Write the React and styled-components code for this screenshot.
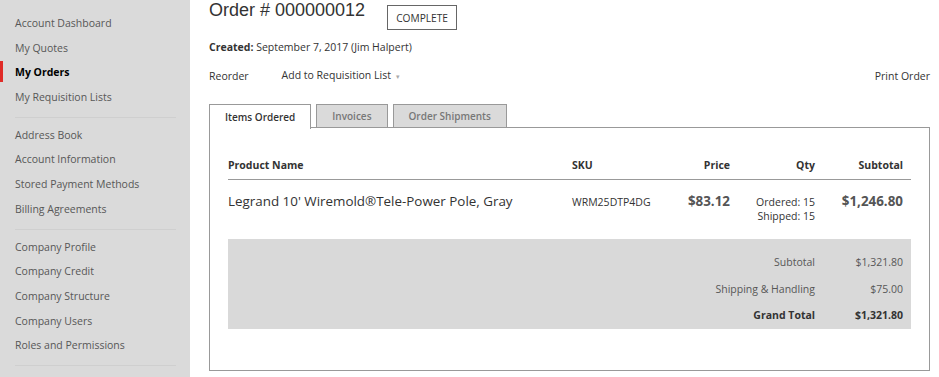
import React from 'react'
import styled, { createGlobalStyle } from 'styled-components'

const GlobalStyle = createGlobalStyle`
    html, body, #root {
        margin: 0;
        padding: 0;
        height: 100%;
    }
    body {
        font-family: "Open Sans", "Liberation Sans", Arial, sans-serif;
        color: #333;
        background: #fff;
        overflow: hidden;
    }
`;

const navGroups = [
    ['Account Dashboard', 'My Quotes', 'My Orders', 'My Requisition Lists'],
    ['Address Book', 'Account Information', 'Stored Payment Methods', 'Billing Agreements'],
    ['Company Profile', 'Company Credit', 'Company Structure', 'Company Users', 'Roles and Permissions'],
];

const totals = [
    { label: 'Subtotal', value: '$1,321.80' },
    { label: 'Shipping & Handling', value: '$75.00' },
    { label: 'Grand Total', value: '$1,321.80', strong: true },
];

const App = () => {
    return (
        <>
            <GlobalStyle />
            <Page>
                <Sidebar>
                    {navGroups.map((group, i) => (
                        <NavGroup key={i}>
                            {group.map(item => (
                                <NavItem key={item} $active={item === 'My Orders'}>{item}</NavItem>
                            ))}
                        </NavGroup>
                    ))}
                </Sidebar>
                <Main>
                    <TitleRow>
                        <Title>Order # 000000012</Title>
                        <Status>Complete</Status>
                    </TitleRow>
                    <Created><b>Created:</b> September 7, 2017 (Jim Halpert)</Created>
                    <Actions>
                        <ActionLink>Reorder</ActionLink>
                        <ActionLink $gap>Add to Requisition List <Caret>▾</Caret></ActionLink>
                        <ActionLink $right>Print Order</ActionLink>
                    </Actions>
                    <Tabs>
                        <Tab $active>Items Ordered</Tab>
                        <Tab>Invoices</Tab>
                        <Tab>Order Shipments</Tab>
                    </Tabs>
                    <Panel>
                        <HeadRow>
                            <HeadCell>Product Name</HeadCell>
                            <HeadCell>SKU</HeadCell>
                            <HeadCell $right>Price</HeadCell>
                            <HeadCell $right>Qty</HeadCell>
                            <HeadCell $right $pad>Subtotal</HeadCell>
                        </HeadRow>
                        <ItemRow>
                            <ProductName>Legrand 10' Wiremold®Tele-Power Pole, Gray</ProductName>
                            <Sku>WRM25DTP4DG</Sku>
                            <Money $right>$83.12</Money>
                            <Qty>
                                <span>Ordered: 15</span>
                                <span>Shipped: 15</span>
                            </Qty>
                            <Money $right $pad>$1,246.80</Money>
                        </ItemRow>
                        <Totals>
                            {totals.map(t => (
                                <TotalRow key={t.label} $strong={t.strong}>
                                    <span>{t.label}</span>
                                    <span>{t.value}</span>
                                </TotalRow>
                            ))}
                        </Totals>
                    </Panel>
                </Main>
            </Page>
        </>
    );
}

const Page = styled.div`
    display: flex;
    min-height: 100vh;
`;

const Sidebar = styled.aside`
    width: 190px;
    flex-shrink: 0;
    background: #dadada;
    padding-top: 11px;
    box-sizing: border-box;
`;

const NavGroup = styled.ul`
    list-style: none;
    margin: 0;
    padding: 0 0 6px;

    &::after{
        content: '';
        display: block;
        height: 1px;
        margin: 0 14px 6px 15px;
        background: #cfcfcf;
        transform: translateY(7px);
    }
`;

const NavItem = styled.li`
    position: relative;
    height: 24.7px;
    line-height: 24.7px;
    padding-left: 15px;
    font-size: 10.5px;
    color: ${p => p.$active ? '#000' : '#575757'};
    font-weight: ${p => p.$active ? 700 : 400};

    &::before{
        content: '';
        display: ${p => p.$active ? 'block' : 'none'};
        position: absolute;
        left: 0;
        top: 1px;
        width: 3px;
        height: 21px;
        background: #e02b27;
    }
`;

const Main = styled.main`
    flex: 1;
    padding: 0 9px 0 19px;
    min-width: 0;
`;

const TitleRow = styled.div`
    display: flex;
    align-items: flex-start;
`;

const Title = styled.h1`
    margin: 0;
    font-family: "Liberation Sans", Arial, sans-serif;
    font-weight: 400;
    font-size: 18px;
    line-height: 21px;
    color: #333;
`;

const Status = styled.span`
    margin: 5px 0 0 22px;
    height: 25px;
    box-sizing: border-box;
    border: 1px solid #666;
    padding: 0 8px;
    display: flex;
    align-items: center;
    font-size: 10.2px;
    text-transform: uppercase;
    color: #333;
`;

const Created = styled.p`
    margin: 9px 0 0;
    font-size: 10.5px;
    line-height: 16px;
    color: #333;

    b{
        font-weight: 700;
    }
`;

const Actions = styled.div`
    display: flex;
    align-items: center;
    margin-top: 13px;
    height: 16px;
`;

const ActionLink = styled.span`
    font-size: 10.5px;
    line-height: 16px;
    color: #333;
    margin-left: ${p => p.$gap ? '33px' : '0'};
    ${p => p.$right && 'margin-left: auto;'}
`;

const Caret = styled.span`
    color: #aaa;
    font-size: 7px;
    margin-left: 2px;
`;

const Tabs = styled.div`
    display: flex;
    gap: 5px;
    margin-top: 20px;
    position: relative;
    z-index: 1;
`;

const Tab = styled.div`
    box-sizing: border-box;
    height: ${p => p.$active ? '25px' : '24px'};
    margin-bottom: ${p => p.$active ? '-1px' : '0'};
    border: 1px solid #999;
    border-bottom: ${p => p.$active ? 'none' : '1px solid #999'};
    background: ${p => p.$active ? '#fff' : '#dadada'};
    color: ${p => p.$active ? '#333' : '#777'};
    font-size: 10px;
    font-weight: 600;
    padding: 0 15px;
    display: flex;
    align-items: center;
    justify-content: center;
`;

const Panel = styled.section`
    border: 1px solid #999;
    box-sizing: border-box;
    height: 244px;
    padding: 29px 18px 0;
    margin-top: -1px;
`;

const columns = '344px 110px 48px 85px 1fr';

const HeadRow = styled.div`
    display: grid;
    grid-template-columns: ${columns};
    border-bottom: 1px solid #999;
    padding-bottom: 6px;
`;

const HeadCell = styled.div`
    font-size: 10.5px;
    font-weight: 700;
    line-height: 16px;
    color: #333;
    text-align: ${p => p.$right ? 'right' : 'left'};
    padding-right: ${p => p.$pad ? '8px' : '0'};
`;

const ItemRow = styled.div`
    display: grid;
    grid-template-columns: ${columns};
    height: 59px;
    align-items: start;
    padding-top: 11px;
    box-sizing: border-box;
`;

const ProductName = styled.div`
    font-size: 13.4px;
    line-height: 20px;
    color: #333;
`;

const Sku = styled.div`
    font-size: 10.5px;
    line-height: 16px;
    padding-top: 3px;
    color: #333;
`;

const Money = styled.div`
    font-size: 13.4px;
    font-weight: 700;
    line-height: 20px;
    color: #555;
    text-align: ${p => p.$right ? 'right' : 'left'};
    padding-right: ${p => p.$pad ? '8px' : '0'};
`;

const Qty = styled.div`
    display: flex;
    flex-direction: column;
    align-items: flex-end;
    padding-top: 4px;
    font-size: 10.5px;
    line-height: 14px;
    color: #333;
`;

const Totals = styled.div`
    background: #d9d9d9;
    height: 90px;
    box-sizing: border-box;
    padding: 10px 8px 0 0;
`;

const TotalRow = styled.div`
    display: grid;
    grid-template-columns: 1fr 88px;
    height: 26.5px;
    align-items: center;
    font-size: 10.5px;
    font-weight: ${p => p.$strong ? 700 : 400};
    color: ${p => p.$strong ? '#333' : '#575757'};
    text-align: right;
`;

export default App;
